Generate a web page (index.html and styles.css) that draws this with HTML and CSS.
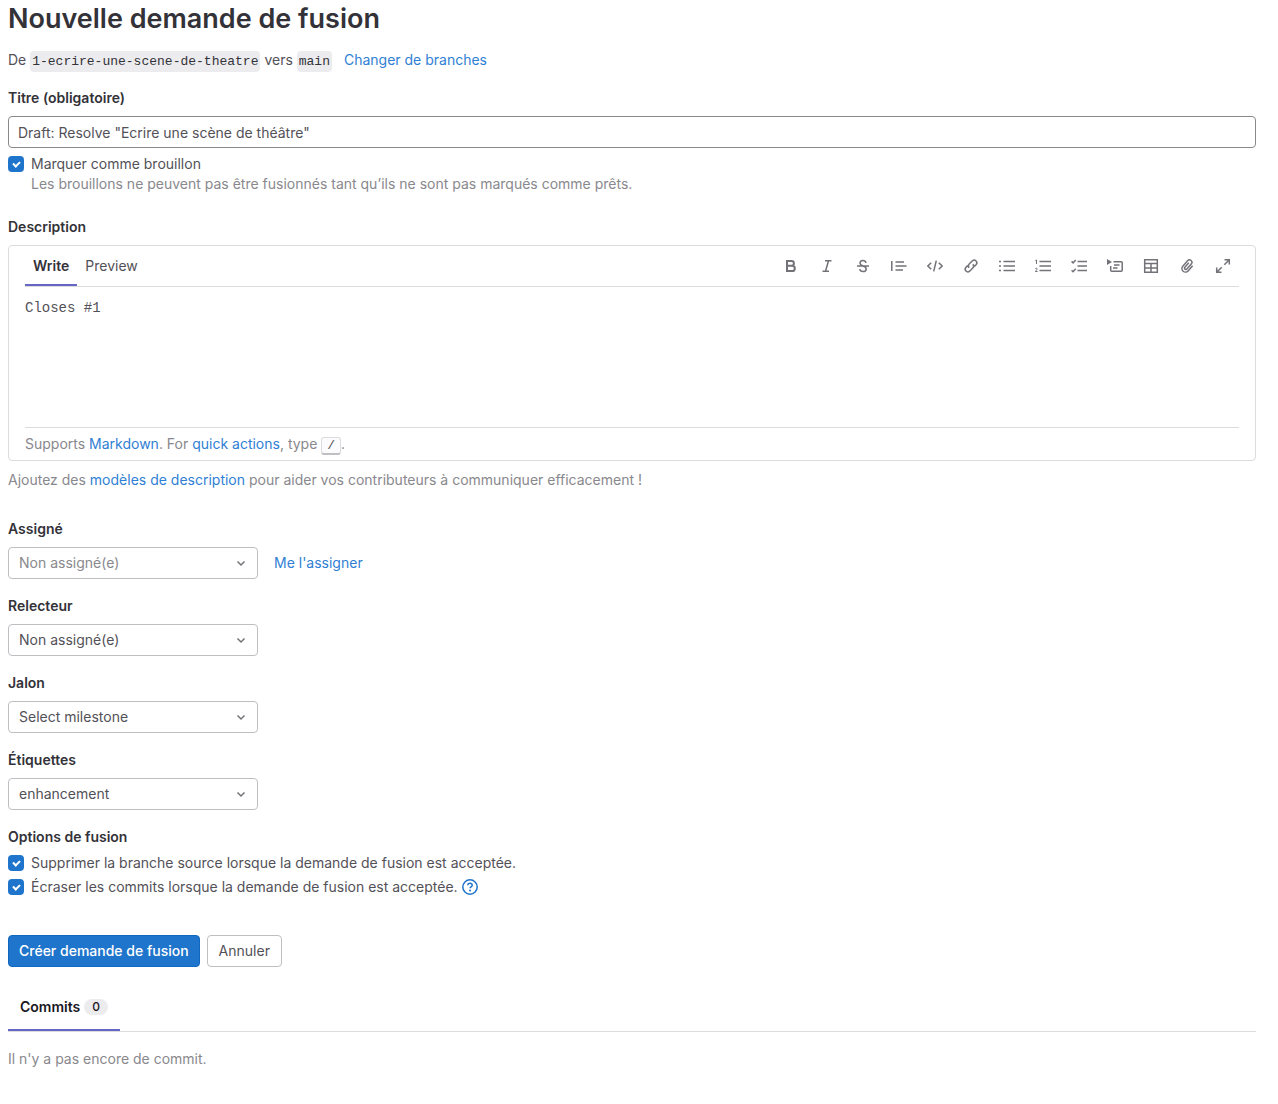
FILE: index.html
```html
<!DOCTYPE html>
<html lang="fr">
<head>
<meta charset="utf-8">
<meta name="viewport" content="width=device-width, initial-scale=1">
<title>Nouvelle demande de fusion</title>
<link rel="stylesheet" href="styles.css">
</head>
<body>
<main class="page">
  <h1 class="page-title">Nouvelle demande de fusion</h1>
  <p class="branches">De <code class="ref">1-ecrire-une-scene-de-theatre</code> vers <code class="ref">main</code> <a class="change" href="#">Changer de branches</a></p>

  <form class="form">
    <div class="field">
      <label class="label" for="title">Titre (obligatoire)</label>
      <input class="text-input" id="title" type="text" value='Draft: Resolve "Ecrire une scène de théâtre"'>
    </div>
    <div class="check draft">
      <input class="checkbox" type="checkbox" id="draft" checked>
      <label for="draft">Marquer comme brouillon<span class="help">Les brouillons ne peuvent pas être fusionnés tant qu’ils ne sont pas marqués comme prêts.</span></label>
    </div>

    <div class="field description">
      <label class="label" for="description">Description</label>
      <div class="editor">
        <div class="editor-bar">
          <div class="editor-tabs">
            <button class="editor-tab active" type="button">Write</button>
            <button class="editor-tab" type="button">Preview</button>
          </div>
          <div class="tools">
            <button class="tool" type="button" aria-label="Gras"><svg class="icon" viewBox="0 0 16 16"><path class="thick" d="M4 3h4.500a2.400 2.400 0 0 1 0 4.800H4zM4 7.800h5.200a2.600 2.600 0 0 1 0 5.200H4z"/></svg></button>
            <button class="tool" type="button" aria-label="Italique"><svg class="icon" viewBox="0 0 16 16"><path d="M6 2.700h6.500M3.500 13.300H10M9.500 2.700l-3 10.600"/></svg></button>
            <button class="tool" type="button" aria-label="Barré"><svg class="icon" viewBox="0 0 16 16"><path d="M11 4.800C10.700 3.300 9.500 2.400 8 2.400S5 3.400 5 5c0 3.600 6.200 2.400 6.200 6 0 1.600-1.400 2.600-3.200 2.600S5 12.700 4.700 11.200M2 8h12"/></svg></button>
            <button class="tool" type="button" aria-label="Citation"><svg class="icon" viewBox="0 0 16 16"><path d="M.8 3v10M4.500 4H13M4.500 8H15.500M4.500 12H12"/></svg></button>
            <button class="tool" type="button" aria-label="Code"><svg class="icon" viewBox="0 0 16 16"><path d="M4.200 4.700.9 8l3.300 3.300M11.800 4.700 15.100 8l-3.300 3.300M9.300 2.600 6.700 13.400"/></svg></button>
            <button class="tool" type="button" aria-label="Lien"><svg class="icon" viewBox="0 0 16 16"><path d="M6.200 9.800a2.700 2.700 0 0 1 0-3.800l3.200-3.200a2.700 2.700 0 0 1 3.800 3.800l-1.800 1.800M9.800 6.200a2.700 2.700 0 0 1 0 3.800l-3.200 3.200a2.700 2.700 0 0 1-3.800-3.800l1.800-1.800"/></svg></button>
            <button class="tool" type="button" aria-label="Liste à puces"><svg class="icon" viewBox="0 0 16 16"><path d="M0 3.500h2M0 8h2M0 12.500h2M4.500 3.500H16M4.500 8H16M4.500 12.500H16"/></svg></button>
            <button class="tool" type="button" aria-label="Liste numérotée"><svg class="icon" viewBox="0 0 16 16"><path d="M4.500 3.500H16M4.500 8H16M4.500 12.500H16"/><path class="thin" d="M.3 2.500 1.500 2v4M.3 10.700c.4-.7 2-.6 2 .3 0 .8-2 1.500-2 2.500h2.300"/></svg></button>
            <button class="tool" type="button" aria-label="Liste de tâches"><svg class="icon" viewBox="0 0 16 16"><path d="M6.500 3.500H16M6.500 8H16M6.500 12.500H16M.6 3.400l1.500 1.500 2.600-3M.6 12.200l1.500 1.500 2.600-3"/></svg></button>
            <button class="tool" type="button" aria-label="Section repliable"><svg class="icon" viewBox="0 0 16 16"><path class="solid" d="M0 1l5 3-5 3z"/><path d="M6.500 3.700h7.700a1 1 0 0 1 1 1v7.600a1 1 0 0 1-1 1H4.700a1 1 0 0 1-1-1V8M7 7h5.500M6 10h4.500"/></svg></button>
            <button class="tool" type="button" aria-label="Tableau"><svg class="icon" viewBox="0 0 16 16"><path d="M1.700 1.700h12.600v12.600H1.700zM1.700 5.500h12.600M1.700 10h12.600M8 5.500v8.800"/></svg></button>
            <button class="tool" type="button" aria-label="Joindre un fichier"><svg class="icon" viewBox="0 0 16 16"><path d="M9.800 4.800 5.900 9.200a1.300 1.300 0 0 0 2 1.800l4.400-5a2.400 2.400 0 0 0-3.700-3.200L3.800 8.300a3.500 3.500 0 0 0 5.300 4.600l4.500-5.100"/></svg></button>
            <button class="tool" type="button" aria-label="Plein écran"><svg class="icon" viewBox="0 0 16 16"><path d="M9.500 1.700h4.800v4.800M14 2 9.300 6.700M6.500 14.300H1.700V9.500M2 14l4.700-4.700"/></svg></button>
          </div>
        </div>
        <textarea class="editor-text" id="description">Closes #1</textarea>
        <p class="editor-foot">Supports <a href="#">Markdown</a>. For <a href="#">quick actions</a>, type <kbd class="key">/</kbd>.</p>
      </div>
      <p class="note">Ajoutez des <a href="#">modèles de description</a> pour aider vos contributeurs à communiquer efficacement !</p>
    </div>

    <div class="selectors">
      <div class="field">
        <label class="label" for="assignee">Assigné</label>
        <div class="row">
          <div class="select-wrap"><select class="select muted" id="assignee"><option>Non assigné(e)</option></select><svg class="icon chevron" viewBox="0 0 16 16"><path d="M4.500 6.500 8 10l3.500-3.500"/></svg></div>
          <a href="#">Me l'assigner</a>
        </div>
      </div>
      <div class="field">
        <label class="label" for="reviewer">Relecteur</label>
        <div class="select-wrap"><select class="select" id="reviewer"><option>Non assigné(e)</option></select><svg class="icon chevron" viewBox="0 0 16 16"><path d="M4.500 6.500 8 10l3.500-3.500"/></svg></div>
      </div>
      <div class="field">
        <label class="label" for="milestone">Jalon</label>
        <div class="select-wrap"><select class="select" id="milestone"><option>Select milestone</option></select><svg class="icon chevron" viewBox="0 0 16 16"><path d="M4.500 6.500 8 10l3.500-3.500"/></svg></div>
      </div>
      <div class="field">
        <label class="label" for="labels">Étiquettes</label>
        <div class="select-wrap"><select class="select" id="labels"><option>enhancement</option></select><svg class="icon chevron" viewBox="0 0 16 16"><path d="M4.500 6.500 8 10l3.500-3.500"/></svg></div>
      </div>
    </div>

    <fieldset class="options">
      <legend class="label">Options de fusion</legend>
      <div class="check">
        <input class="checkbox" type="checkbox" id="remove" checked>
        <label for="remove">Supprimer la branche source lorsque la demande de fusion est acceptée.</label>
      </div>
      <div class="check">
        <input class="checkbox" type="checkbox" id="squash" checked>
        <label for="squash">Écraser les commits lorsque la demande de fusion est acceptée.</label>
        <a class="help-link" href="#" aria-label="Aide"><svg class="icon" viewBox="0 0 16 16"><circle cx="8" cy="8" r="7.200"/><path d="M5.800 6.300C5.900 5 6.800 4.300 8 4.300c1.300 0 2.200.8 2.200 1.900 0 1.600-2.200 1.600-2.200 3.100"/><circle class="solid" cx="8" cy="11.500" r="1"/></svg></a>
      </div>
    </fieldset>

    <div class="actions">
      <button class="btn primary" type="submit">Créer demande de fusion</button>
      <button class="btn" type="button">Annuler</button>
    </div>
  </form>

  <nav class="tabs">
    <a class="tab" href="#">Commits <span class="badge">0</span></a>
  </nav>
  <p class="empty">Il n'y a pas encore de commit.</p>
</main>
</body>
</html>
```

FILE: styles.css
```css
*, *::before, *::after { box-sizing: border-box; }

body {
  margin: 0;
  background: #fff;
  color: #535158;
  font: 14px/20px Inter, "Liberation Sans", sans-serif;
}

p, h1 { margin: 0; }
a { color: #2f80d4; text-decoration: none; }
button, input, select, textarea { font: inherit; color: inherit; margin: 0; }

.page { padding: 0 22px 32px 8px; }

.page-title {
  color: #333238;
  font-size: 27px;
  font-weight: 600;
  line-height: 38px;
}

.branches { margin-top: 12px; }
.ref {
  padding: 3px 2px;
  border-radius: 4px;
  background: #ececef;
  color: #333238;
  font: 13px/17px "Liberation Mono", monospace;
}
.change { margin-left: 8px; }

.form { margin-top: 18px; }
.label {
  display: block;
  margin-bottom: 8px;
  padding: 0;
  color: #333238;
  font-weight: 600;
}

.text-input {
  display: block;
  width: 100%;
  height: 32px;
  padding: 0 9px;
  border: 1px solid #89888d;
  border-radius: 4px;
  background: #fff;
}

.check { display: flex; align-items: flex-start; }
.check label { margin-left: 7px; }
.draft { margin-top: 6px; }
.help { display: block; color: #89888d; }

.checkbox {
  appearance: none;
  display: grid;
  place-items: center;
  width: 16px;
  height: 16px;
  margin-top: 2px;
  border-radius: 4px;
  background: #1f75cb;
}
.checkbox:checked::before {
  content: "";
  width: 7px;
  height: 5px;
  margin-top: -2px;
  border: solid #fff;
  border-width: 0 0 2px 2px;
  transform: rotate(-45deg);
}

.description { margin-top: 23px; }
.editor {
  padding: 0 16px;
  border: 1px solid #dcdcde;
  border-radius: 4px;
}
.editor-bar {
  display: flex;
  justify-content: space-between;
  height: 41px;
  border-bottom: 1px solid #dcdcde;
}
.editor-tabs { display: flex; }
.editor-tab {
  height: 40px;
  padding: 2px 8px 0;
  border: 0;
  border-bottom: 2px solid transparent;
  background: none;
}
.editor-tab.active {
  border-color: #6666c4;
  color: #333238;
  font-weight: 600;
}
.tools { display: flex; align-items: center; gap: 4px; }
.tool {
  display: grid;
  place-items: center;
  width: 32px;
  height: 32px;
  padding: 0;
  border: 0;
  background: none;
  color: #737278;
}

.icon {
  display: block;
  width: 16px;
  height: 16px;
  fill: none;
  stroke: currentColor;
  stroke-width: 1.5;
}
.icon .thick { stroke-width: 2; }
.icon .thin { stroke-width: 1; }
.icon .solid { fill: currentColor; stroke: none; }

.editor-text {
  display: block;
  width: 100%;
  height: 140px;
  padding: 11px 0 9px;
  border: 0;
  resize: none;
  outline: 0;
  font: 14px/20px "Liberation Mono", monospace;
}
.editor-foot {
  padding: 6px 0;
  border-top: 1px solid #dcdcde;
  color: #89888d;
}
.key {
  padding: 0 5px;
  border: 1px solid #dcdcde;
  border-bottom: 2px solid #bfbfc3;
  border-radius: 3px;
  background: #fbfafd;
  color: #535158;
  font: 13px/15px "Liberation Mono", monospace;
}
.note { margin-top: 9px; color: #89888d; }

.selectors {
  display: grid;
  gap: 17px;
  margin-top: 29px;
}
.row { display: flex; align-items: center; gap: 16px; }
.select-wrap { display: grid; width: 250px; align-items: center; }
.select-wrap > * { grid-area: 1 / 1; }
.select {
  appearance: none;
  width: 100%;
  height: 32px;
  padding: 0 32px 0 10px;
  border: 1px solid #bfbfc3;
  border-radius: 4px;
  background: #fff;
}
.muted { color: #89888d; }
.chevron {
  justify-self: end;
  margin-right: 9px;
  color: #737278;
  pointer-events: none;
}

.options {
  display: grid;
  gap: 4px;
  margin: 17px 0 0;
  padding: 0;
  border: 0;
}
.options .label { margin-bottom: 6px; }
.help-link { margin: 2px 0 0 4px; color: #1f75cb; }

.actions { display: flex; gap: 7px; margin-top: 38px; }
.btn {
  height: 32px;
  padding: 0 11px;
  border: 1px solid #bfbfc3;
  border-radius: 4px;
  background: #fff;
}
.primary {
  padding: 0 10px;
  border-color: #1068bf;
  background: #1f75cb;
  color: #fff;
  font-weight: 500;
}

.tabs {
  display: flex;
  margin-top: 17px;
  border-bottom: 1px solid #dcdcde;
}
.tab {
  display: flex;
  align-items: center;
  gap: 4px;
  height: 47px;
  padding: 0 12px;
  border-bottom: 2px solid #6666c4;
  color: #18171d;
  font-weight: 600;
}
.badge {
  padding: 0 8px;
  border-radius: 8px;
  background: #ececef;
  font-size: 12px;
  font-weight: 500;
  line-height: 16px;
}
.empty { margin-top: 17px; color: #89888d; }
```
